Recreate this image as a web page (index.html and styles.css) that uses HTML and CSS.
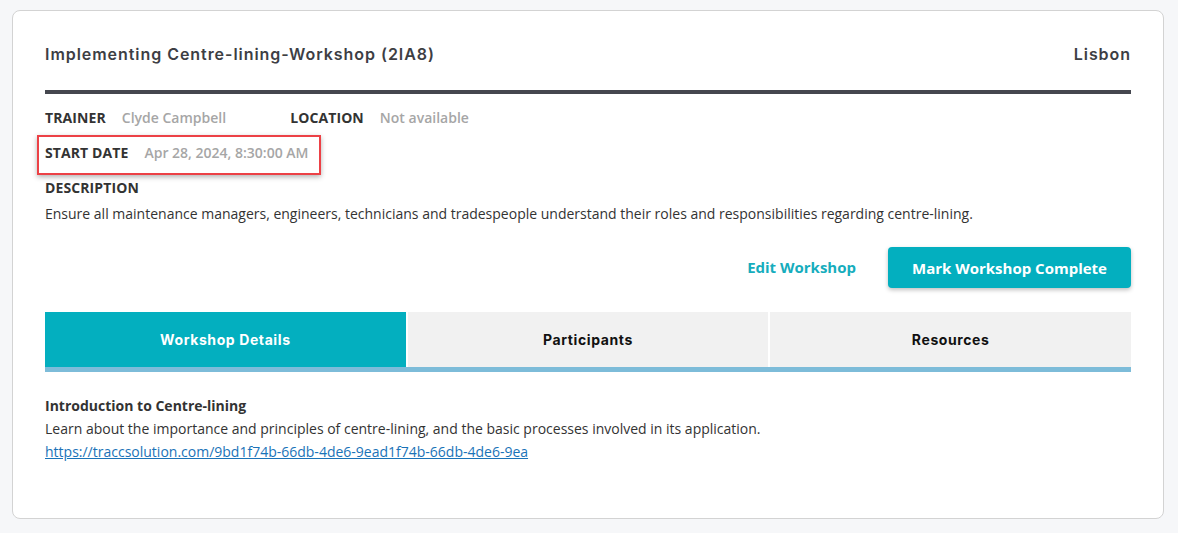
FILE: index.html
```html
<!DOCTYPE html>
<html lang="en">
<head>
  <meta charset="UTF-8" />
  <title>Workshop</title>
  <link rel="stylesheet" href="styles.css">
</head>
<body>
  <div class="card">
    <div class="card-head">
      <h2 class="title">Implementing Centre-lining-Workshop (2IA8)</h2>
      <span class="city">Lisbon</span>
    </div>

    <div class="meta-row">
      <div class="meta"><span class="label">TRAINER</span><span class="value">Clyde Campbell</span></div>
      <div class="meta"><span class="label">LOCATION</span><span class="value">Not available</span></div>
    </div>

    <div class="meta-row">
      <div class="meta highlight"><span class="label">START DATE</span><span class="value">Apr 28, 2024, 8:30:00 AM</span></div>
    </div>

    <div class="desc">
      <div class="label">DESCRIPTION</div>
      <p>Ensure all maintenance managers, engineers, technicians and tradespeople understand their roles and responsibilities regarding centre-lining.</p>
    </div>

    <div class="actions">
      <a class="btn-link" href="#">Edit Workshop</a>
      <button class="btn-primary">Mark Workshop Complete</button>
    </div>

    <div class="tabs">
      <div class="tab active">Workshop Details</div>
      <div class="tab">Participants</div>
      <div class="tab">Resources</div>
    </div>

    <div class="tab-body">
      <h4>Introduction to Centre-lining</h4>
      <p>Learn about the importance and principles of centre-lining, and the basic processes involved in its application.</p>
      <a href="#">https://traccsolution.com/9bd1f74b-66db-4de6-9ead1f74b-66db-4de6-9ea</a>
    </div>
  </div>
</body>
</html>
```

FILE: styles.css
```css
* {
  box-sizing: border-box;
}
body {
  margin: 0;
  padding: 10px 14px 15px 12px;
  background: #f6f7f9;
  font-family: 'Open Sans', sans-serif;
  font-size: 14px;
  color: #333;
}

.card {
  background: #fff;
  border: 1px solid #d3d3d3;
  border-radius: 8px;
  padding: 29px 32px 55px 32px;
}

.card-head {
  display: flex;
  justify-content: space-between;
  align-items: center;
  padding-bottom: 22px;
  border-bottom: 4px solid #45474f;
}

.title, .city {
  margin: 0;
  font-family: Inter, sans-serif;
  font-weight: 600;
  font-size: 16px;
  letter-spacing: 0.95px;
  color: #3d3e44;
  line-height: 28px;
}

.meta-row {
  display: flex;
  gap: 64px;
  margin-top: 14px;
}

.meta {
  display: flex;
  gap: 16px;
  line-height: 20px;
}

.label {
  font-weight: 700;
  color: #333;
  letter-spacing: 0.1px;
}

.value {
  color: #a6a6a6;
  font-weight: 600;
}

.highlight {
  margin-left: -8px;
  padding: 6px 10px 10px 6px;
  border: 2px solid #ec4146;
  box-shadow: 0 2px 5px rgba(0,0,0,0.3);
}

.meta-row + .meta-row {
  margin-top: 7px;
}

.desc {
  margin-top: 3px;
  line-height: 20px;
}

.desc p {
  margin: 5px 0 0;
  line-height: 22px;
}

.actions {
  display: flex;
  justify-content: flex-end;
  align-items: center;
  gap: 32px;
  margin-top: 22px;
}

.btn-link {
  color: #16adbd;
  font-weight: 700;
  font-size: 15px;
  text-decoration: none;
  margin-top: -2px;
}

.btn-primary {
  background: #03afbf;
  color: #fff;
  border: none;
  border-radius: 4px;
  height: 41px;
  padding: 0 24px;
  font-family: 'Open Sans', sans-serif;
  font-weight: 700;
  font-size: 15px;
  box-shadow: 0 2px 4px rgba(0,0,0,0.25);
  cursor: pointer;
}

.tabs {
  display: grid;
  grid-template-columns: 1fr 1fr 1fr;
  gap: 2px;
  margin-top: 24px;
  border-bottom: 5px solid #7dbcd9;
}

.tab {
  height: 55px;
  display: flex;
  justify-content: center;
  align-items: center;
  background: #f1f1f1;
  font-family: Inter, sans-serif;
  font-weight: 700;
  font-size: 14px;
  letter-spacing: 0.6px;
  color: #111;
}

.tab.active {
  background: #03afbf;
  color: #fff;
}

.tab-body {
  padding-top: 22px;
  line-height: 23px;
}

.tab-body h4 {
  margin: 0;
  font-size: 14px;
  font-weight: 700;
}

.tab-body p {
  margin: 0;
}

.tab-body a {
  color: #1a73b8;
}
```
